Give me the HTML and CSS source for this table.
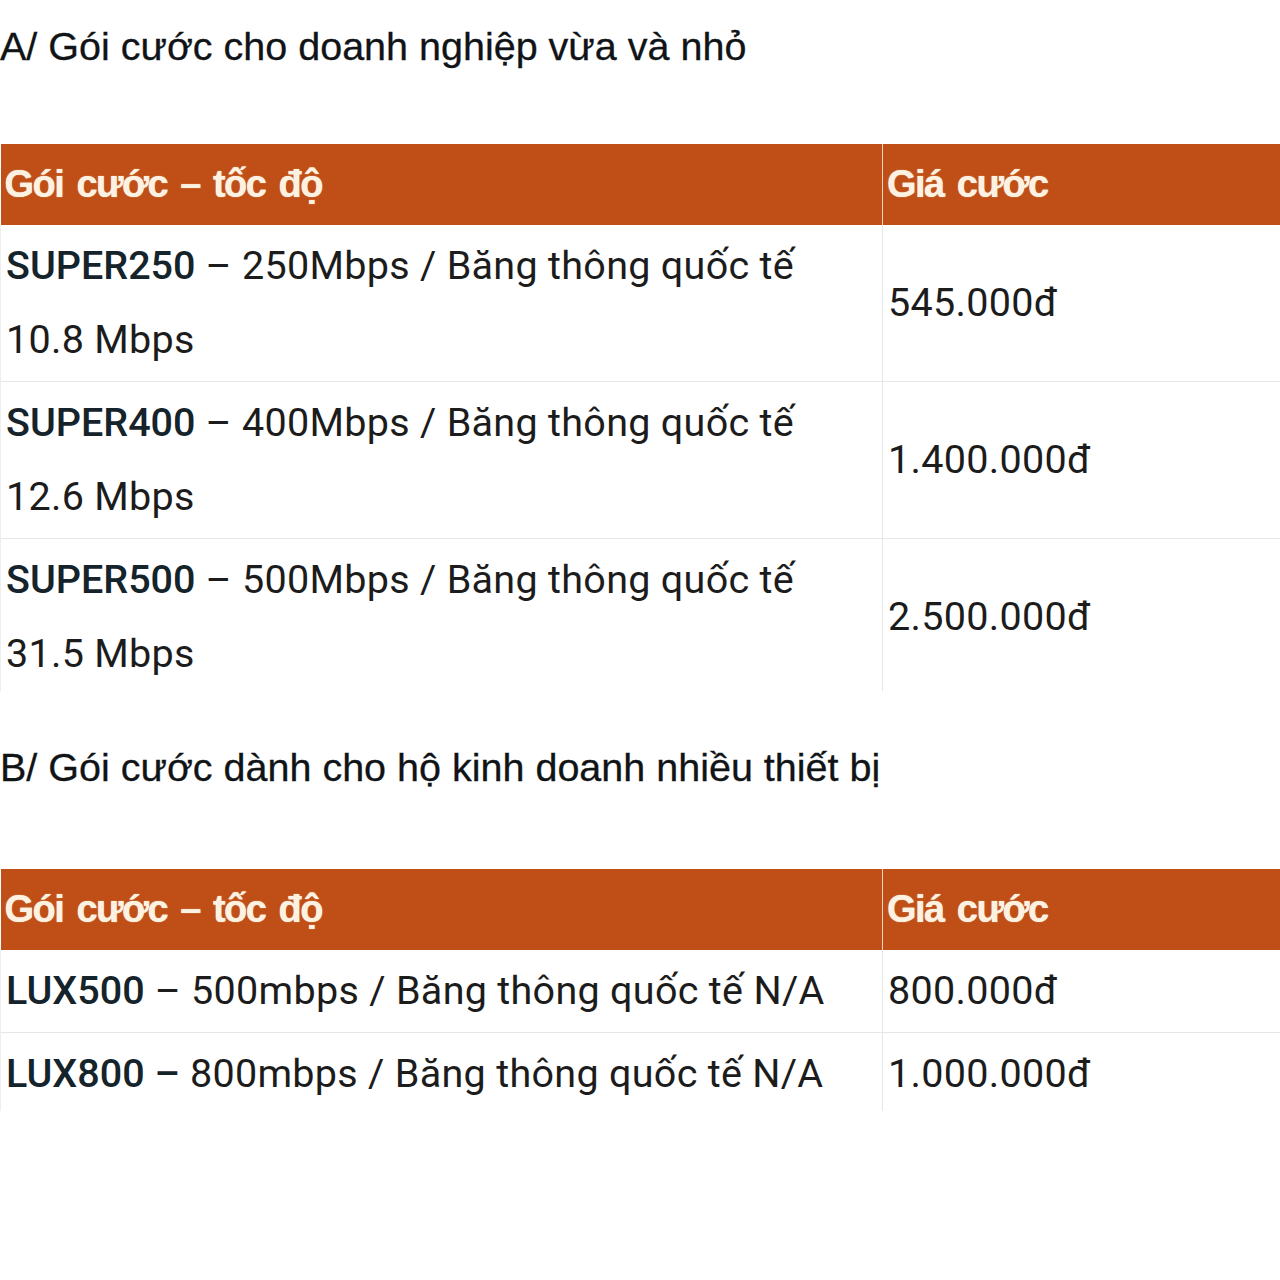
FILE: index.html
```html
<!DOCTYPE html>
<html lang="vi">
<head>
<meta charset="utf-8">
<title>Gói cước</title>
<link rel="stylesheet" href="styles.css">
</head>
<body>
<h2 class="title title-a">A/ Gói cước cho doanh nghiệp vừa và nhỏ</h2>
<table class="plans plans-a">
  <colgroup><col class="col1"><col class="col2"></colgroup>
  <thead>
    <tr><th class="c1">Gói cước – tốc độ</th><th class="c2">Giá cước</th></tr>
  </thead>
  <tbody>
    <tr><td class="c1"><strong>SUPER250</strong> – 250Mbps / Băng thông quốc tế<br>10.8 Mbps</td><td class="c2">545.000đ</td></tr>
    <tr><td class="c1"><strong>SUPER400</strong> – 400Mbps / Băng thông quốc tế<br>12.6 Mbps</td><td class="c2">1.400.000đ</td></tr>
    <tr><td class="c1"><strong>SUPER500</strong> – 500Mbps / Băng thông quốc tế<br>31.5 Mbps</td><td class="c2">2.500.000đ</td></tr>
  </tbody>
</table>
<h2 class="title title-b">B/ Gói cước dành cho hộ kinh doanh nhiều thiết bị</h2>
<table class="plans plans-b">
  <colgroup><col class="col1"><col class="col2"></colgroup>
  <thead>
    <tr><th class="c1">Gói cước – tốc độ</th><th class="c2">Giá cước</th></tr>
  </thead>
  <tbody>
    <tr><td class="c1"><strong>LUX500</strong> – 500mbps / Băng thông quốc tế N/A</td><td class="c2">800.000đ</td></tr>
    <tr><td class="c1"><strong>LUX800 –</strong> 800mbps / Băng thông quốc tế N/A</td><td class="c2">1.000.000đ</td></tr>
  </tbody>
</table>
</body>
</html>
```

FILE: styles.css
```css
html, body {
  margin: 0;
  padding: 0;
  background: #ffffff;
}
body {
  font-family: Roboto, "Noto Sans", sans-serif;
  color: #1c1c1c;
}
.title {
  font-family: "Liberation Sans", Arial, sans-serif;
  font-weight: 400;
  font-size: 39.5px;
  line-height: 44px;
  color: #111417;
  margin: 0;
  -webkit-text-stroke: 0.3px #111417;
}
.title-a {
  padding-top: 24px;
}
.title-b {
  margin-top: 54px;
}
.plans {
  width: 1280px;
  border-collapse: collapse;
  table-layout: fixed;
}
.plans-a {
  margin-top: 76px;
}
.plans-b {
  margin-top: 80px;
}
.plans .col1 {
  width: 882px;
}
.plans th {
  background: #bf4f16;
  color: #fdf2e1;
  font-family: "Liberation Sans", Arial, sans-serif;
  font-weight: 700;
  font-size: 38px;
  line-height: 73px;
  letter-spacing: -1.5px;
  word-spacing: 4px;
  text-align: left;
  padding: 4px;
  text-shadow: 0 0 1px #fff3dc;
}
.plans th.c2 {
  border-left: 1px solid #f1d6bf;
}
.plans td {
  font-size: 39.5px;
  line-height: 74px;
  letter-spacing: 0.3px;
  padding: 4px 4px 4px 5px;
  vertical-align: middle;
  border-top: 1px solid #e6e6e6;
  color: #1c1c1c;
}
.plans tbody tr:first-child td {
  border-top: none;
}
.plans tbody tr:last-child td {
  padding-bottom: 0;
}
.plans td.c2 {
  border-left: 1px solid #e6e6e6;
}
.plans td.c1 {
  border-left: 1px solid #eeeeee;
}
.plans strong {
  font-weight: 500;
  letter-spacing: 0;
  color: #15232b;
}
```
